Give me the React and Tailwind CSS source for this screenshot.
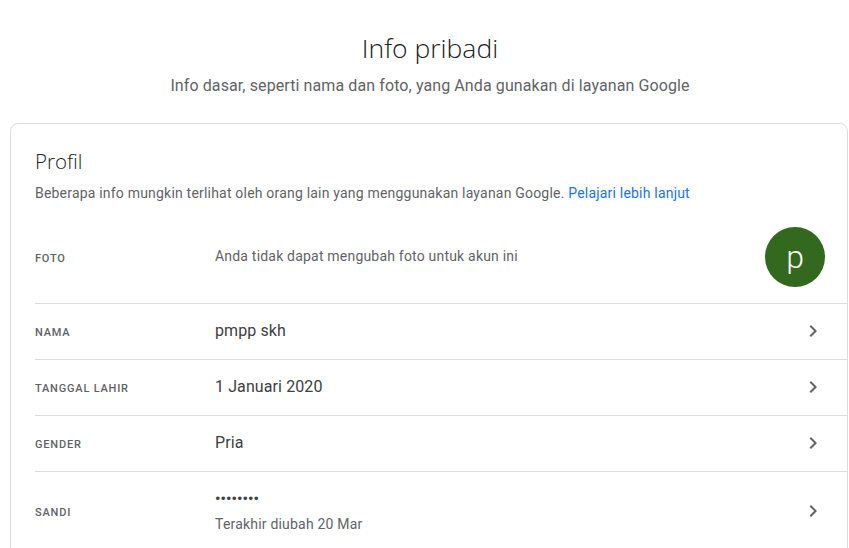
import React from "react";

const rows = [
  { label: "NAMA", value: "pmpp skh" },
  { label: "TANGGAL LAHIR", value: "1 Januari 2020" },
  { label: "GENDER", value: "Pria" },
];

const Label = ({ children, className = "mt-[2px]" }) => (
  <div className={`${className} w-[180px] shrink-0 text-[11px] leading-4 font-medium tracking-[0.8px] text-[#5f6368]`}>
    {children}
  </div>
);

const Arrow = () => (
  <svg viewBox="0 0 24 24" className="mr-[22px] mb-px h-6 w-6 shrink-0 fill-[#5f6368]">
    <path d="M10 6 8.59 7.41 13.17 12l-4.58 4.59L10 18l6-6z" />
  </svg>
);

export default function App() {
  return (
    <div className="h-[548px] w-[849px] overflow-hidden bg-white font-['Roboto',sans-serif]">
      {/* Header */}
      <div className="pt-[29px] pl-[11px] text-center">
        <h1 className="font-['Open_Sans',sans-serif] text-[26.5px] leading-[38px] font-light text-[#202124]">Info pribadi</h1>
        <p className="mt-[7px] text-base leading-6 tracking-[0.1px] text-[#5f6368]">
          Info dasar, seperti nama dan foto, yang Anda gunakan di layanan Google
        </p>
      </div>

      {/* Profil card */}
      <div className="mt-[25px] ml-[10px] mr-px h-[440px] rounded-lg border border-[#dadce0] pl-6">
        <h2 className="mt-[23px] font-['Open_Sans',sans-serif] text-[20.5px] leading-7 font-light text-[#202124]">Profil</h2>
        <p className="mt-[8px] text-sm leading-5 tracking-[0.2px] text-[#5f6368]">
          Beberapa info mungkin terlihat oleh orang lain yang menggunakan layanan Google.{" "}
          <span className="text-[#1a73e8]">Pelajari lebih lanjut</span>
        </p>

        <div className="mt-px flex h-[100px] items-center border-b border-[#dadce0] pt-[6px]">
          <Label className="mt-[4px]">FOTO</Label>
          <div className="mb-[2px] flex-1 text-sm leading-5 tracking-[0.2px] text-[#5f6368]">
            Anda tidak dapat mengubah foto untuk akun ini
          </div>
          <div className="mr-[22px] flex h-[60px] w-[60px] items-center justify-center rounded-full bg-[#33691e] text-[32px] leading-none font-light text-white">
            p
          </div>
        </div>

        {rows.map((row) => (
          <div key={row.label} className="flex h-[56px] items-center border-b border-[#dadce0]">
            <Label>{row.label}</Label>
            <div className="mb-px flex-1 text-base leading-6 tracking-[0.1px] text-[#3c4043]">{row.value}</div>
            <Arrow />
          </div>
        ))}

        <div className="flex h-[78px] items-center">
          <Label className="mt-[4px]">SANDI</Label>
          <div className="mb-[2px] flex-1">
            <div className="text-[15px] leading-6 font-bold tracking-[0.1px] text-[#3c4043]">••••••••</div>
            <div className="mt-[3px] text-sm leading-5 tracking-[0.2px] text-[#5f6368]">Terakhir diubah 20 Mar</div>
          </div>
          <Arrow />
        </div>
      </div>
    </div>
  );
}
